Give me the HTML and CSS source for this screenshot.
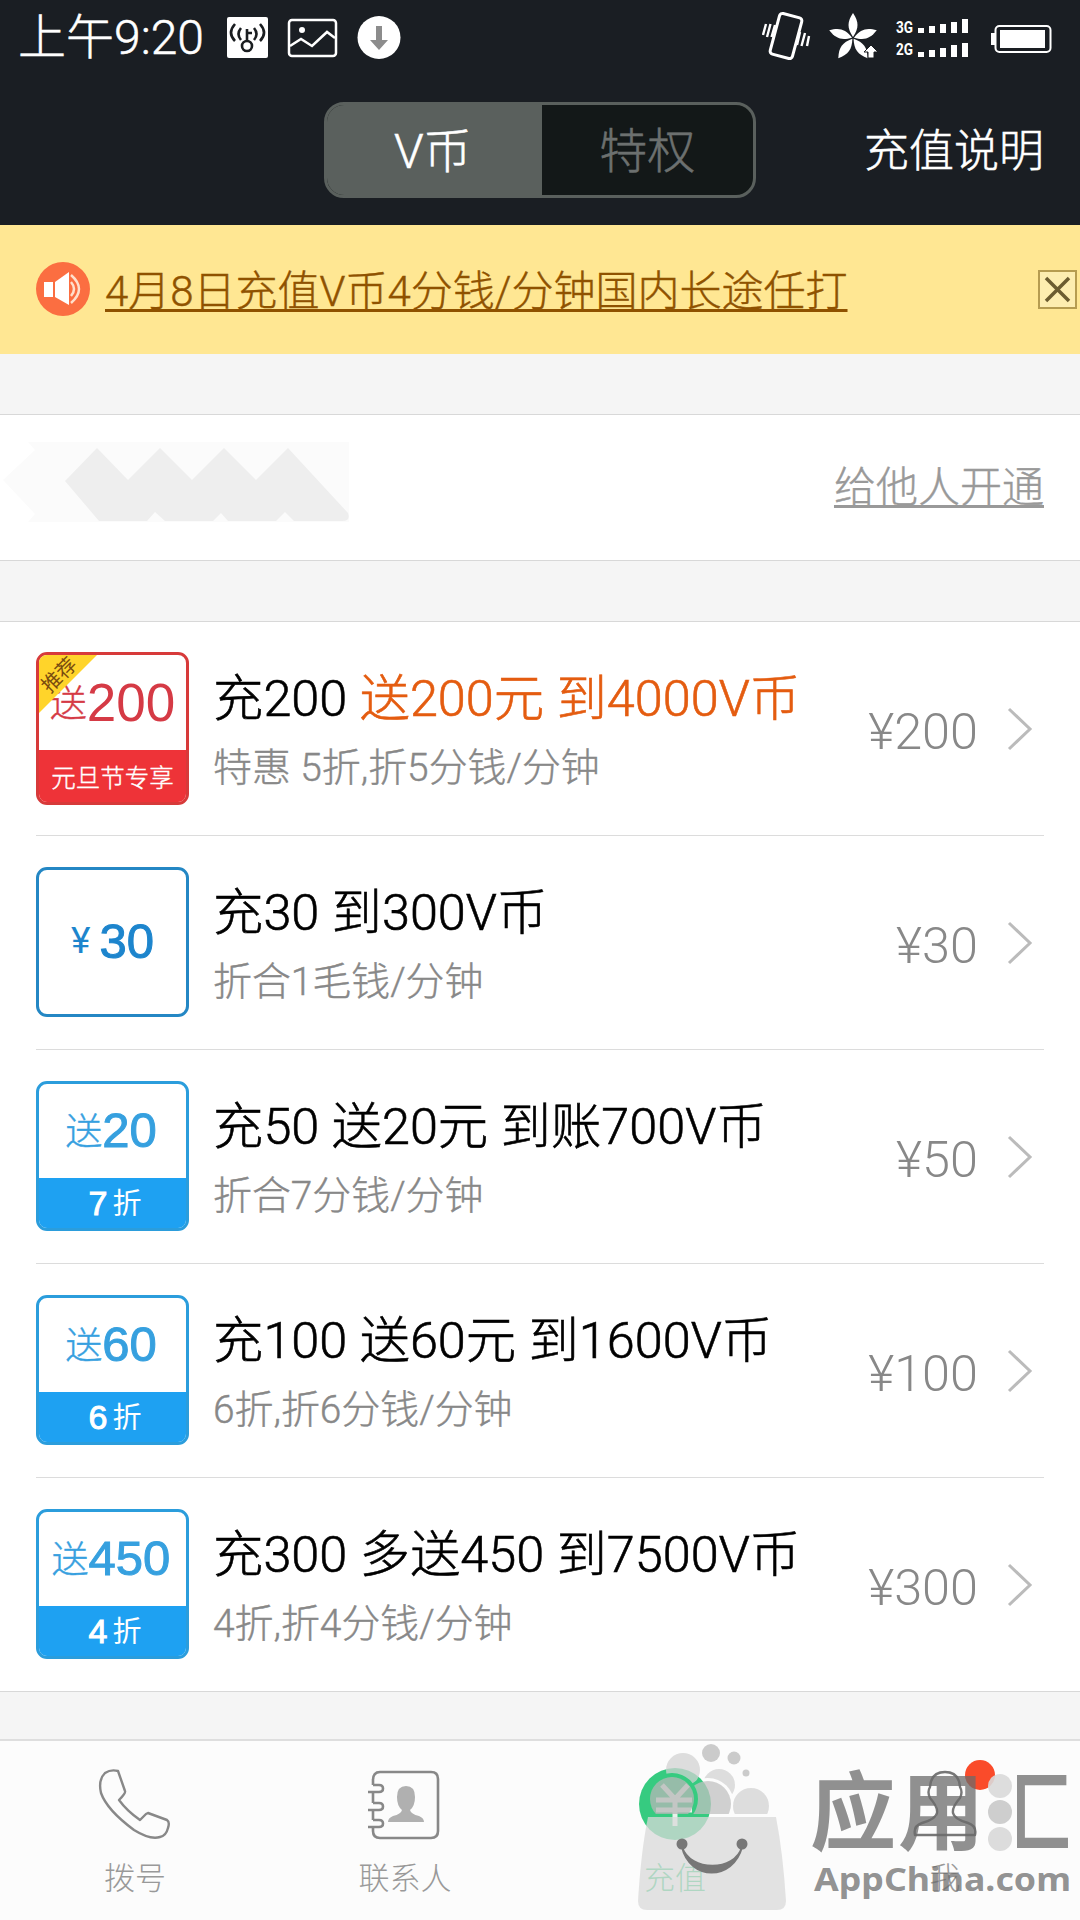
FILE: index.html
```html
<!DOCTYPE html>
<html lang="zh-CN">
<head>
    <meta charset="UTF-8">
    <meta name="viewport" content="width=device-width, initial-scale=1.0">
    <title>充值</title>
    <link rel="stylesheet" href="styles.css">
</head>
<body>
    <div class="app">
        <div class="status-bar">
            <span class="time">上午9:20</span>
            <svg class="status-left" width="174" height="46" viewBox="0 0 174 46">
                <rect x="0" y="2" width="41" height="41" rx="2" fill="#fff"/>
                <g fill="none" stroke="#1a1d20" stroke-width="2.6">
                    <circle cx="20" cy="31" r="5"/>
                    <path d="M20 26V14M20 18h5M14 13q-5 6 0 12M8 9q-8 9 0 17M27 13q5 6 0 12M33 9q8 9 0 17"/>
                </g>
                <rect x="62" y="5" width="47" height="36" rx="3" fill="none" stroke="#fff" stroke-width="2.5"/>
                <circle cx="75" cy="15" r="3" fill="#fff"/>
                <path d="M63 31l11-7 11 7 15-14 8 6" fill="none" stroke="#fff" stroke-width="2.5"/>
                <circle cx="152" cy="22.500" r="21.5" fill="#fff"/>
                <path d="M149 11h6v14h6l-9 10-9-10h6z" fill="#8c8c8c"/>
            </svg>
            <svg class="status-right" width="292" height="50" viewBox="0 0 292 50">
                <g fill="none" stroke="#fff" stroke-width="3">
                    <rect x="12.500" y="4" width="23" height="42" rx="3" transform="rotate(15 24 25)"/>
                    <path d="M4 13l-3 11M8.500 13l-3.500 13M13 14l-3.500 12M38 21l-3 13M43 22l-3.500 13M47 25l-2 10" stroke-width="2.400"/>
                </g>
                <g fill="#fff" transform="translate(91 27)">
                    <path d="M0-1C-6-10-6-16 0-25 6-16 6-10 0-1z"/>
                    <path d="M0-1C-6-10-6-16 0-25 6-16 6-10 0-1z" transform="rotate(72)"/>
                    <path d="M0-1C-6-10-6-16 0-25 6-16 6-10 0-1z" transform="rotate(144)"/>
                    <path d="M0-1C-6-10-6-16 0-25 6-16 6-10 0-1z" transform="rotate(216)"/>
                    <path d="M0-1C-6-10-6-16 0-25 6-16 6-10 0-1z" transform="rotate(288)"/>
                    <path d="M18 7l7 7h-4v6h-6v-6h-4z" stroke="#1a1d20" stroke-width="1"/>
                </g>
                <g fill="#fff">
                    <text class="net" x="134" y="22" textLength="17" lengthAdjust="spacingAndGlyphs">3G</text>
                    <text class="net" x="134" y="44" textLength="17" lengthAdjust="spacingAndGlyphs">2G</text>
                    <path d="M156 17h6v5h-6zM167 15h6v7h-6zM178 13h6v9h-6zM189 11h6v11h-6zM200 8h6v14h-6z"/>
                    <path d="M156 41h6v5h-6zM167 39h6v7h-6zM178 37h6v9h-6zM189 34h6v12h-6zM200 32h6v14h-6z"/>
                    <rect x="238" y="19" width="45" height="18"/>
                    <path d="M229 22h4v12h-4z"/>
                </g>
                <rect x="233.500" y="15" width="55" height="26" rx="4" fill="none" stroke="#fff" stroke-width="2"/>
            </svg>
        </div>

        <div class="nav-bar">
            <div class="segment">
                <span class="segment-item active">V币</span>
                <span class="segment-item">特权</span>
            </div>
            <a class="nav-link">充值说明</a>
        </div>

        <div class="notice">
            <svg width="54" height="54" viewBox="0 0 54 54">
                <circle cx="27" cy="27" r="27" fill="#fb6e41"/>
                <path d="M8 20h9v15H8z" fill="#fff"/>
                <path d="M19 20l14-10v33L19 35z" fill="#fff"/>
                <path d="M35 20q6 7 0 14M35 13q16 14 0 28" fill="none" stroke="#ffe0cc" stroke-width="2.5"/>
            </svg>
            <a class="notice-text">4月8日充值V币4分钱/分钟国内长途任打</a>
            <svg class="notice-close" width="39" height="39" viewBox="0 0 39 39">
                <rect x="1" y="1" width="37" height="37" fill="#fdedb0" stroke="#b69c50" stroke-width="2"/>
                <path d="M8 8l23 23M31 8L8 31" stroke="#6c5c30" stroke-width="3.500"/>
            </svg>
        </div>

        <div class="account">
            <svg width="350" height="82" viewBox="0 0 350 82">
                <path d="M25 0h321v80H25l7-8L0 38 32 8z" fill="#fbfbfb"/>
                <path d="M62 39L94 6l31 32 32-32 32 32 32-32 32 32 32-32 60 65q3 8-6 8h-48l-9-9-9 9h-48l-7-8-8 8h-48l-10-9-8 9h-48z" fill="#eee"/>
            </svg>
            <a class="account-link">给他人开通</a>
        </div>

        <div class="list">
            <div class="item">
                <div class="badge red">
                    <div class="badge-top"><span>送</span><b>200</b></div>
                    <div class="badge-bottom">元旦节专享</div>
                    <div class="ribbon"><span>推荐</span></div>
                </div>
                <div class="info">
                    <p class="title">充200 <span class="hot">送200元 到4000V币</span></p>
                    <p class="desc">特惠 5折,折5分钱/分钟</p>
                </div>
                <span class="price">¥200</span>
                <svg class="arrow" width="26" height="44" viewBox="0 0 26 44"><path d="M2 2l21 20L2 42"/></svg>
            </div>
            <div class="item">
                <div class="badge plain">
                    <div class="badge-top"><span>¥</span><b>30</b></div>
                </div>
                <div class="info">
                    <p class="title">充30 到300V币</p>
                    <p class="desc">折合1毛钱/分钟</p>
                </div>
                <span class="price">¥30</span>
                <svg class="arrow" width="26" height="44" viewBox="0 0 26 44"><path d="M2 2l21 20L2 42"/></svg>
            </div>
            <div class="item">
                <div class="badge">
                    <div class="badge-top"><span>送</span><b>20</b></div>
                    <div class="badge-bottom"><b>7</b>折</div>
                </div>
                <div class="info">
                    <p class="title">充50 送20元 到账700V币</p>
                    <p class="desc">折合7分钱/分钟</p>
                </div>
                <span class="price">¥50</span>
                <svg class="arrow" width="26" height="44" viewBox="0 0 26 44"><path d="M2 2l21 20L2 42"/></svg>
            </div>
            <div class="item">
                <div class="badge">
                    <div class="badge-top"><span>送</span><b>60</b></div>
                    <div class="badge-bottom"><b>6</b>折</div>
                </div>
                <div class="info">
                    <p class="title">充100 送60元 到1600V币</p>
                    <p class="desc">6折,折6分钱/分钟</p>
                </div>
                <span class="price">¥100</span>
                <svg class="arrow" width="26" height="44" viewBox="0 0 26 44"><path d="M2 2l21 20L2 42"/></svg>
            </div>
            <div class="item">
                <div class="badge">
                    <div class="badge-top"><span>送</span><b>450</b></div>
                    <div class="badge-bottom"><b>4</b>折</div>
                </div>
                <div class="info">
                    <p class="title">充300 多送450 到7500V币</p>
                    <p class="desc">4折,折4分钱/分钟</p>
                </div>
                <span class="price">¥300</span>
                <svg class="arrow" width="26" height="44" viewBox="0 0 26 44"><path d="M2 2l21 20L2 42"/></svg>
            </div>
        </div>

        <div class="tab-bar">
            <div class="tab">
                <svg width="74" height="74" viewBox="0 0 74 74" fill="none" stroke="#888" stroke-width="2.400" stroke-linejoin="round">
                    <path d="M7 6Q13 2 20 4L27 24Q28 26 21 33 29 44 42 53L48 47 50 46 69 53Q72 55 70 61 68 69 62 70 52 73 36 63 9 43 3 26 0 13 7 6z"/>
                </svg>
                <span>拨号</span>
            </div>
            <div class="tab">
                <svg width="74" height="74" viewBox="0 0 74 74" fill="none" stroke="#888" stroke-width="2.600">
                    <path d="M5 18V13Q5 5 12 5H63Q70 5 70 12V64Q70 71 63 71H12Q5 71 5 64V60M5 25V36M5 43V53"/>
                    <path d="M5 18h6q4 0 4 3.500T11 25H0M5 36h6q4 0 4 3.500T11 43H0M5 53h6q4 0 4 3.500T11 60H0"/>
                    <path d="M38 19q9 0 9 11 0 9-5 13 1 4 9 6 5 2 5 6H20q0-4 5-6 8-2 9-6-5-4-5-13 0-11 9-11z" fill="#b0b0b0" stroke="none"/>
                </svg>
                <span>联系人</span>
            </div>
            <div class="tab active">
                <svg width="74" height="74" viewBox="0 0 74 74">
                    <circle cx="37" cy="37" r="36" fill="#36cb80"/>
                    <path d="M24 18l13 14 13-14M37 31v28M18 33h36M18 43h36" fill="none" stroke="#e6f2ea" stroke-width="5"/>
                </svg>
                <span>充值</span>
            </div>
            <div class="tab">
                <svg width="74" height="74" viewBox="0 0 74 74" fill="none" stroke="#777" stroke-width="2.400" stroke-linejoin="round">
                    <path d="M37 5Q51 5 52 20 55 25 52 31 44 40 45 46 46 52 60 56 69 59 67 68H7Q5 59 14 56 28 52 29 46 30 40 22 31 19 25 22 20 23 5 37 5z"/>
                </svg>
                <span>我</span>
                <i class="dot"></i>
            </div>

            <!-- store watermark -->
            <svg class="watermark" width="460" height="180" viewBox="0 0 460 180">
                <defs>
                    <clipPath id="above"><rect x="0" y="0" width="460" height="73"/></clipPath>
                    <mask id="gaps">
                        <rect width="460" height="180" fill="#fff"/>
                        <circle cx="52" cy="58" r="26" fill="#000"/>
                        <circle cx="88" cy="63" r="26" fill="#000"/>
                    </mask>
                    <mask id="gap2">
                        <rect width="460" height="180" fill="#fff"/>
                        <circle cx="52" cy="58" r="26" fill="#000"/>
                    </mask>
                    <clipPath id="box"><rect x="397" y="0" width="63" height="120"/></clipPath>
                </defs>
                <g fill="#d3d3d3" opacity=".74">
                    <path d="M28 76H156Q163 112 166 160 166 169 157 169H27Q18 169 18 160 21 110 28 76z" fill="#dadada"/>
                    <g clip-path="url(#above)">
                        <circle cx="52" cy="58" r="22" fill="#b8b8b8"/>
                        <circle cx="88" cy="63" r="23" fill="#c2c2c2" mask="url(#gap2)"/>
                        <circle cx="131" cy="65" r="18"/>
                        <circle cx="63" cy="29" r="17" mask="url(#gaps)"/>
                        <circle cx="99" cy="44" r="16" mask="url(#gaps)"/>
                    </g>
                    <circle cx="91" cy="12" r="9" fill="#bbb"/>
                    <circle cx="114" cy="17" r="6.500" fill="#bbb"/>
                    <circle cx="126" cy="32" r="3.500" fill="#bbb"/>
                </g>
                <g fill="#777">
                    <circle cx="62" cy="103" r="5.500"/>
                    <circle cx="122" cy="103" r="5.500"/>
                    <path d="M62 106C70 140 113 140 122 106 115 131 70 131 62 106z" stroke="#777" stroke-width="2"/>
                </g>
                <g fill="#6a6a6a" fill-opacity=".74">
                    <text class="brand" x="190" y="103">应</text>
                    <text class="brand" x="278" y="103">用</text>
                    <text class="brand" x="365" y="103" clip-path="url(#box)">汇</text>
                    <text class="domain" x="194" y="150" textLength="257" lengthAdjust="spacingAndGlyphs">AppChina.com</text>
                </g>
                <circle cx="380" cy="45" r="12" fill="#d9d9d9" opacity=".9"/>
                <circle cx="380" cy="71" r="12" fill="#cecece"/>
                <circle cx="380" cy="98" r="12" fill="#dcdcdc"/>
            </svg>
        </div>
    </div>
</body>
</html>
```

FILE: styles.css
```css
* {
    margin: 0;
    padding: 0;
    box-sizing: border-box;
}

body {
    width: 1080px;
    font-family: Roboto, 'Noto Sans CJK SC', sans-serif;
    font-weight: 300;
    background: #f5f5f5;
}

.app {
    display: flex;
    flex-direction: column;
    height: 1920px;
    overflow: hidden;
}

/* Header */
.status-bar {
    display: flex;
    align-items: center;
    height: 75px;
    padding: 0 26px 0 18px;
    background: #1a1e23;
    color: #fff;
}

.time {
    width: 209px;
    font-size: 48px;
    line-height: 75px;
    white-space: nowrap;
    -webkit-text-stroke: 0.5px currentColor;
}

.status-right {
    margin: 0 0 4px auto;
}

.net {
    font-size: 17px;
    font-weight: 700;
}

.nav-bar {
    display: flex;
    align-items: center;
    justify-content: space-between;
    height: 150px;
    padding: 0 36px 0 324px;
    background: #1a1e23;
    color: #fff;
    -webkit-text-stroke: 0.5px currentColor;
}

.segment {
    display: flex;
    width: 432px;
    height: 96px;
    border: 3px solid #5a605d;
    border-radius: 20px;
    background: #131818;
    overflow: hidden;
}

.segment-item {
    flex: 1;
    font-size: 48px;
    line-height: 93px;
    text-align: center;
    color: #6c706f;
}

.segment-item.active {
    padding-right: 3px;
    background: #5a605d;
    color: #fff;
}

.nav-link {
    padding-bottom: 5px;
    font-size: 45px;
}

/* Notice */
.notice {
    display: flex;
    align-items: center;
    height: 129px;
    padding: 0 3px 1px 36px;
    background: #ffe793;
}

.notice-text {
    margin-left: 15px;
    padding-bottom: 3px;
    font-size: 42px;
    color: #8f5200;
    text-decoration: underline;
    text-decoration-thickness: 3px;
    text-decoration-skip-ink: none;
    text-underline-offset: 3px;
    -webkit-text-stroke: 0.4px currentColor;
}

.notice-close {
    margin-left: auto;
}

/* Account row */
.account {
    display: flex;
    align-items: center;
    justify-content: space-between;
    height: 147px;
    margin-top: 60px;
    padding: 0 36px 10px 3px;
    background: #fff;
    border-top: 1px solid #d8d8d8;
    border-bottom: 1px solid #d8d8d8;
}

.account-link {
    padding-top: 2px;
    font-size: 42px;
    color: #999;
    text-decoration: underline;
    text-decoration-thickness: 3px;
    text-decoration-skip-ink: none;
    text-underline-offset: 3px;
    -webkit-text-stroke: 0.4px currentColor;
}

/* Packages */
.list {
    margin-top: 60px;
    padding: 0 36px;
    background: #fff;
    border-top: 1px solid #d8d8d8;
    border-bottom: 1px solid #d8d8d8;
}

.item {
    display: flex;
    align-items: center;
    height: 214px;
    border-bottom: 1px solid #dcdcdc;
}

.item:last-child {
    height: 213px;
    border-bottom: none;
}

.badge {
    position: relative;
    display: flex;
    flex-direction: column;
    width: 153px;
    height: 150px;
    margin-bottom: 2px;
    border: 3px solid #2b9ddc;
    border-radius: 11px;
    background: #fff;
    color: #36a0df;
    overflow: hidden;
}

.badge-top {
    flex: 1;
    display: flex;
    align-items: center;
    justify-content: center;
    padding: 0 3px 1px 0;
    font-size: 37px;
    line-height: 1;
}

.badge-top span {
    padding-top: 5px;
    -webkit-text-stroke: 0.4px currentColor;
}

.badge-top b {
    font-family: 'Liberation Sans', sans-serif;
    font-size: 49px;
    font-weight: 400;
    -webkit-text-stroke: 1px currentColor;
}

.badge-bottom {
    display: flex;
    align-items: center;
    justify-content: center;
    gap: 5px;
    height: 50px;
    padding: 4px 0 0 5px;
    background: #1ea1f2;
    color: #fff;
    font-size: 29px;
    font-weight: 400;
    line-height: 1;
}

.badge-bottom b {
    margin-top: -3px;
    font-family: 'Liberation Sans', sans-serif;
    font-size: 34px;
    font-weight: 400;
    -webkit-text-stroke: 1px currentColor;
}

.badge.red {
    height: 153px;
    margin-bottom: 0;
    border-color: #d73a3a;
    color: #d53a45;
}

.badge.red .badge-top {
    padding: 0 0 1px;
}

.badge.red .badge-top b {
    font-size: 53px;
    -webkit-text-stroke: 0;
}

.badge.red .badge-bottom {
    height: 52px;
    padding: 6px 0 0;
    background: #ee3338;
    font-size: 24.5px;
    font-weight: 300;
    -webkit-text-stroke: 0.4px currentColor;
}

.badge.plain {
    border-color: #2487c4;
    color: #1d85cd;
}

.badge.plain .badge-top {
    gap: 9px;
    padding: 0;
}

.badge.plain .badge-top span {
    padding: 0 0 2px;
    font-weight: 400;
    -webkit-text-stroke: 0;
}

/* Corner mark on the recommended package */
.ribbon {
    position: absolute;
    top: 0;
    left: 0;
    width: 58px;
    height: 58px;
    background: #ffd42a;
    clip-path: polygon(0 0, 100% 0, 0 100%);
}

.ribbon span {
    position: absolute;
    top: 8px;
    left: 0;
    font-size: 20px;
    font-weight: 400;
    line-height: 24px;
    color: #7a4d10;
    transform: rotate(-45deg);
}

.info {
    flex: 1;
    margin-left: 24px;
    padding-top: 8px;
    white-space: nowrap;
}

.title {
    font-size: 50.4px;
    line-height: 70px;
    color: #000;
    -webkit-text-stroke: 0.6px currentColor;
}

.hot {
    color: #e45c10;
}

.desc {
    font-size: 38.9px;
    line-height: 68px;
    color: #888;
    -webkit-text-stroke: 0.4px currentColor;
}

.price {
    padding-top: 5px;
    font-size: 50.4px;
    color: #888;
}

.arrow {
    margin: 0 11px 0 29px;
    fill: none;
    stroke: #bbb;
    stroke-width: 3;
}

/* Tabs */
.tab-bar {
    position: relative;
    display: flex;
    height: 181px;
    margin-top: auto;
    background: #fcfcfc;
    border-top: 2px solid #dedede;
}

.tab {
    position: relative;
    flex: 1;
    display: flex;
    flex-direction: column;
    align-items: center;
    padding-top: 26px;
    font-size: 31px;
    line-height: 40px;
    color: #999;
}

.tab span {
    margin-top: 18px;
}

.tab.active {
    color: #36cb80;
}

.dot {
    position: absolute;
    top: 19px;
    left: 155px;
    width: 30px;
    height: 30px;
    border-radius: 50%;
    background: #fa4b2a;
}

.watermark {
    position: absolute;
    top: 0;
    left: 620px;
}

.brand {
    font-family: 'Noto Sans CJK SC', sans-serif;
    font-size: 86px;
    font-weight: 700;
}

.domain {
    font-family: 'Noto Sans', sans-serif;
    font-size: 33px;
    font-weight: 700;
}
```
